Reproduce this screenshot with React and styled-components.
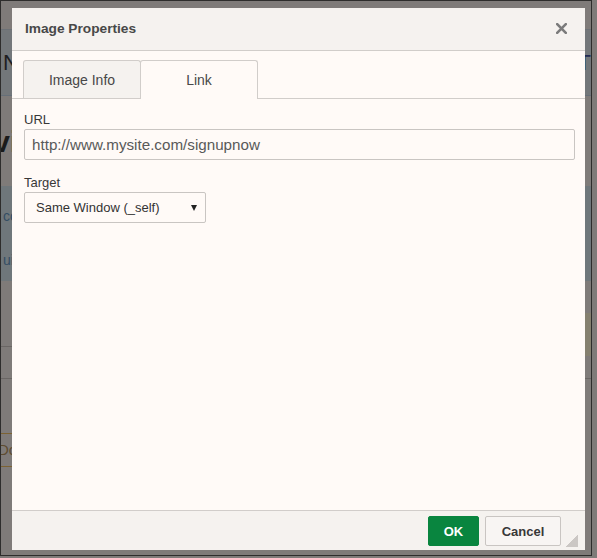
import React from 'react'
import styled, { createGlobalStyle } from 'styled-components'

const GlobalStyle = createGlobalStyle`
  html, body {
    margin: 0;
    padding: 0;
    background: #7f7b79;
  }
  body {
    font-family: Arial, "Liberation Sans", Helvetica, sans-serif;
  }
  * { box-sizing: border-box; }
`

// window frame around the dimmed page
const Frame = styled.div`
  position: relative;
  width: 592px;
  height: 556px;
  border: 1px solid #2e2d2c;
  overflow: hidden;
  background: #7f7b79;
`

// the page behind the modal cover (already dimmed colours)
const Page = styled.div`
  display: flex;
  flex-direction: column;
  padding-top: 28px;
`

const NavBar = styled.div`
  height: 67px;
  background: #73777a;
  border-top: 1px solid #6c7176;
  border-bottom: 1px solid #666f78;
  display: flex;
  align-items: center;
  justify-content: space-between;
  padding-left: 2px;
  font-size: 22px;
  color: #1f1f22;
`

const NavRight = styled.span`
  margin-right: -6px;
  color: #222a52;
`

const PageTitle = styled.h1`
  margin: 28px 0 0 -56px;
  font-size: 30px;
  line-height: 36px;
  font-weight: bold;
  color: #1b1b1b;
  white-space: nowrap;
`

const InfoCard = styled.div`
  margin-top: 26px;
  height: 95px;
  background: #6f777b;
  padding: 22px 0 0 2px;
  display: flex;
  flex-direction: column;
  gap: 28px;
  font-size: 14px;
  color: #344d63;
`

const TableRow = styled.div`
  height: 32px;
  border-bottom: 1px solid #6a6664;
  margin-top: ${({ first }) => (first ? '34px' : '0')};
`

const PageButton = styled.div`
  margin: 54px 0 0 -3px;
  width: 120px;
  height: 34px;
  border-top: 1px solid #7c6232;
  border-bottom: 1px solid #7c6232;
  line-height: 32px;
  font-size: 15px;
  color: #5e4c30;
`

const SideNote = styled.div`
  position: absolute;
  right: 0;
  top: 312px;
  width: 8px;
  height: 43px;
  background: #85806f;
`

// dialog
const Dialog = styled.div`
  position: absolute;
  left: 11px;
  top: 7px;
  width: 573px;
  height: 542px;
  display: flex;
  flex-direction: column;
  background: #fffaf7;
  color: #484848;
`

const TitleBar = styled.div`
  height: 43px;
  flex-shrink: 0;
  background: #f5f2ef;
  border-bottom: 1px solid #d1cdca;
  display: flex;
  align-items: center;
  justify-content: space-between;
  padding: 0 18px 1px 13px;
`

const Title = styled.div`
  font-size: 13.7px;
  font-weight: bold;
  color: #484848;
`

const CloseButton = styled.button`
  width: 11px;
  height: 11px;
  padding: 0;
  border: none;
  background: none;
  display: flex;
  cursor: pointer;
`

const Body = styled.div`
  flex: 1;
  display: flex;
  flex-direction: column;
`

const TabStrip = styled.div`
  margin-top: 9px;
  padding-left: 11px;
  display: flex;
  align-items: flex-end;
  border-bottom: 1px solid #d1cdca;
`

const Tab = styled.div`
  width: 118px;
  height: ${({ active }) => (active ? '39px' : '38px')};
  margin-bottom: ${({ active }) => (active ? '-1px' : '0')};
  margin-left: ${({ first }) => (first ? '0' : '-1px')};
  border: 1px solid #d1cdca;
  border-bottom: ${({ active }) => (active ? 'none' : '0')};
  border-radius: 3px 3px 0 0;
  background: ${({ active }) => (active ? '#fffaf7' : '#f5f2ef')};
  display: flex;
  align-items: center;
  justify-content: center;
  padding-bottom: ${({ active }) => (active ? '1px' : '0')};
  font-size: 14px;
  color: #484848;
  position: relative;
  z-index: ${({ active }) => (active ? 1 : 0)};
`

const Panel = styled.div`
  padding: 13px 10px 0 12px;
  display: flex;
  flex-direction: column;
`

const Field = styled.div`
  display: flex;
  flex-direction: column;
  gap: 2px;
  margin-bottom: 15px;
`

const Label = styled.label`
  font-size: 13px;
  line-height: 15px;
  color: #383838;
`

const TextInput = styled.input`
  width: 551px;
  height: 31px;
  border: 1px solid #c9c5c2;
  border-radius: 2px;
  padding: 0 7px;
  font-family: inherit;
  font-size: 15.2px;
  color: #595959;
  background: #fffaf7;
  outline: none;
`

const SelectBox = styled.div`
  width: 182px;
  height: 31px;
  border: 1px solid #c9c5c2;
  border-radius: 2px;
  background: #fffaf7;
  display: flex;
  align-items: center;
  justify-content: space-between;
  padding: 0 8px 0 11px;
  font-size: 13px;
  color: #333;
`

const Caret = styled.span`
  width: 0;
  height: 0;
  border-left: 3.5px solid transparent;
  border-right: 3.5px solid transparent;
  border-top: 6px solid #222;
  margin-top: 1px;
`

const Footer = styled.div`
  position: relative;
  height: 40px;
  flex-shrink: 0;
  background: #f5f2ef;
  border-top: 1px solid #d1cdca;
  display: flex;
  justify-content: flex-end;
  align-items: flex-start;
  gap: 6px;
  padding: 5px 24px 0 0;
`

const Button = styled.button`
  height: 30px;
  width: ${({ primary }) => (primary ? '51px' : '76px')};
  border-radius: 2px;
  border: 1px solid ${({ primary }) => (primary ? '#09853f' : '#c9c5c2')};
  background: ${({ primary }) => (primary ? '#09853f' : '#f8f5f3')};
  color: ${({ primary }) => (primary ? '#fff' : '#383838')};
  font-family: inherit;
  font-size: 13px;
  font-weight: bold;
  padding: 0;
  cursor: pointer;
`

const ResizeGrip = styled.div`
  position: absolute;
  right: 7px;
  bottom: 3px;
  width: 12px;
  height: 12px;
  background: linear-gradient(to bottom right, transparent 50%, #cbc7c4 50%);
`

export default function App() {
  return (
    <>
      <GlobalStyle />
      <Frame>
        <Page>
          <NavBar>
            <span>Newsletter</span>
            <NavRight>EDITI</NavRight>
          </NavBar>
          <PageTitle>Preview your email</PageTitle>
          <InfoCard>
            <span>content</span>
            <span>uit</span>
          </InfoCard>
          <TableRow first />
          <TableRow />
          <PageButton>Download</PageButton>
        </Page>
        <SideNote />

        <Dialog>
          <TitleBar>
            <Title>Image Properties</Title>
            <CloseButton aria-label="Close">
              <svg width="11" height="11" viewBox="0 0 11 11">
                <path
                  d="M1.2 1.2 L9.8 9.8 M9.8 1.2 L1.2 9.8"
                  stroke="#7b7b7b"
                  strokeWidth="2.6"
                  strokeLinecap="square"
                />
              </svg>
            </CloseButton>
          </TitleBar>
          <Body>
            <TabStrip>
              <Tab first>Image Info</Tab>
              <Tab active>Link</Tab>
            </TabStrip>
            <Panel>
              <Field>
                <Label>URL</Label>
                <TextInput defaultValue="http://www.mysite.com/signupnow" />
              </Field>
              <Field>
                <Label>Target</Label>
                <SelectBox>
                  <span>Same Window (_self)</span>
                  <Caret />
                </SelectBox>
              </Field>
            </Panel>
          </Body>
          <Footer>
            <Button primary>OK</Button>
            <Button>Cancel</Button>
            <ResizeGrip />
          </Footer>
        </Dialog>
      </Frame>
    </>
  )
}
